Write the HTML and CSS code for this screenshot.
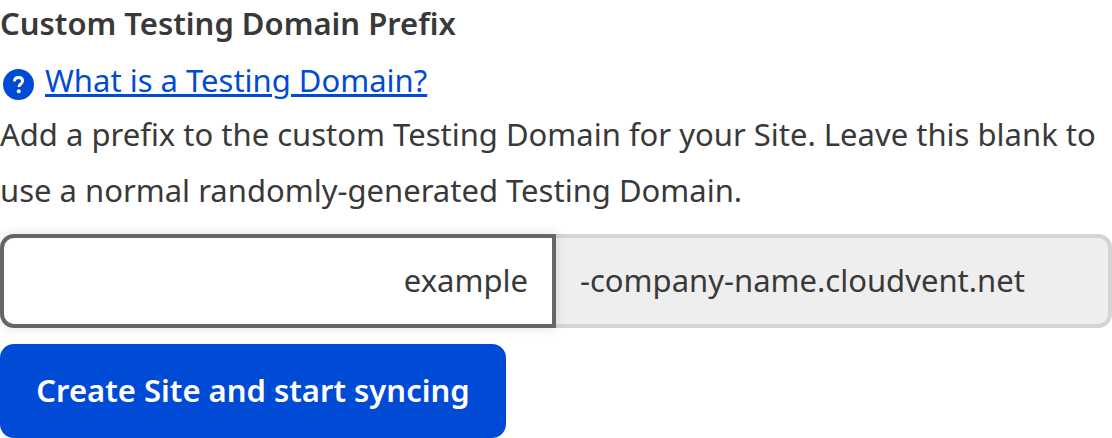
FILE: index.html
```html
<!DOCTYPE html>
<html lang="en">
<head>
    <meta charset="UTF-8">
    <title>Custom Testing Domain Prefix</title>
    <link rel="stylesheet" href="styles.css">
</head>
<body>
    <form class="domain-form">
        <div class="field-title">Custom Testing Domain Prefix</div>
        <div class="help-row">
            <svg class="help-icon" viewBox="0 0 32 32" width="31" height="31">
                <circle cx="16" cy="16" r="16" fill="#004bd6"/>
                <path d="M11.8 12.800c.1-2.500 1.800-4 4.300-4 2.400 0 4.100 1.400 4.100 3.500 0 1.600-.8 2.500-2.100 3.400-1.200.8-1.600 1.400-1.600 2.800" fill="none" stroke="#fff" stroke-width="3"/>
                <circle cx="16.300" cy="23" r="2" fill="#fff"/>
            </svg>
            <a class="help-link" href="#">What is a Testing Domain?</a>
        </div>
        <p class="field-text">Add a prefix to the custom Testing Domain for your Site. Leave this blank to use a normal randomly-generated Testing Domain.</p>
        <div class="input-group">
            <input class="prefix-input" type="text" placeholder="example">
            <div class="domain-suffix">-company-name.cloudvent.net</div>
        </div>
        <button class="submit-button" type="button">Create Site and start syncing</button>
    </form>
</body>
</html>
```

FILE: styles.css
```css
* {
    margin: 0;
    padding: 0;
    box-sizing: border-box;
}

body {
    font-family: 'Noto Sans', sans-serif;
    font-size: 31px;
    color: #393939;
    background: #fff;
    overflow: hidden;
}

.domain-form {
    width: 1112px;
}

.field-title {
    font-weight: 600;
    line-height: 46px;
}

.help-row {
    display: flex;
    align-items: center;
    gap: 11px;
    height: 52px;
    margin-top: 8px;
    padding-left: 3px;
}

.help-icon {
    flex: none;
    margin-top: 9px;
}

.help-link {
    color: #004bd6;
}

.field-text {
    line-height: 56px;
}

.input-group {
    display: flex;
    height: 94px;
    margin-top: 16px;
}

.prefix-input {
    position: relative;
    width: 556px;
    height: 94px;
    border: 4px solid #666;
    border-radius: 14px 0 0 14px;
    padding: 0 24px 3px;
    font: inherit;
    text-align: right;
    background: #fff;
    box-shadow: 0 0 12px rgba(0, 0, 0, 0.12);
}

.prefix-input::placeholder {
    color: #393939;
    opacity: 1;
}

.domain-suffix {
    flex: 1;
    display: flex;
    align-items: center;
    padding: 0 0 3px 24px;
    background: #eee;
    border: 4px solid #d4d4d4;
    border-left: none;
    border-radius: 0 14px 14px 0;
}

.submit-button {
    display: block;
    width: 506px;
    height: 94px;
    margin-top: 16px;
    padding-bottom: 2px;
    border: none;
    border-radius: 14px;
    background: #004bd6;
    color: #fff;
    font: inherit;
    font-weight: 600;
    position: relative;
}
```
